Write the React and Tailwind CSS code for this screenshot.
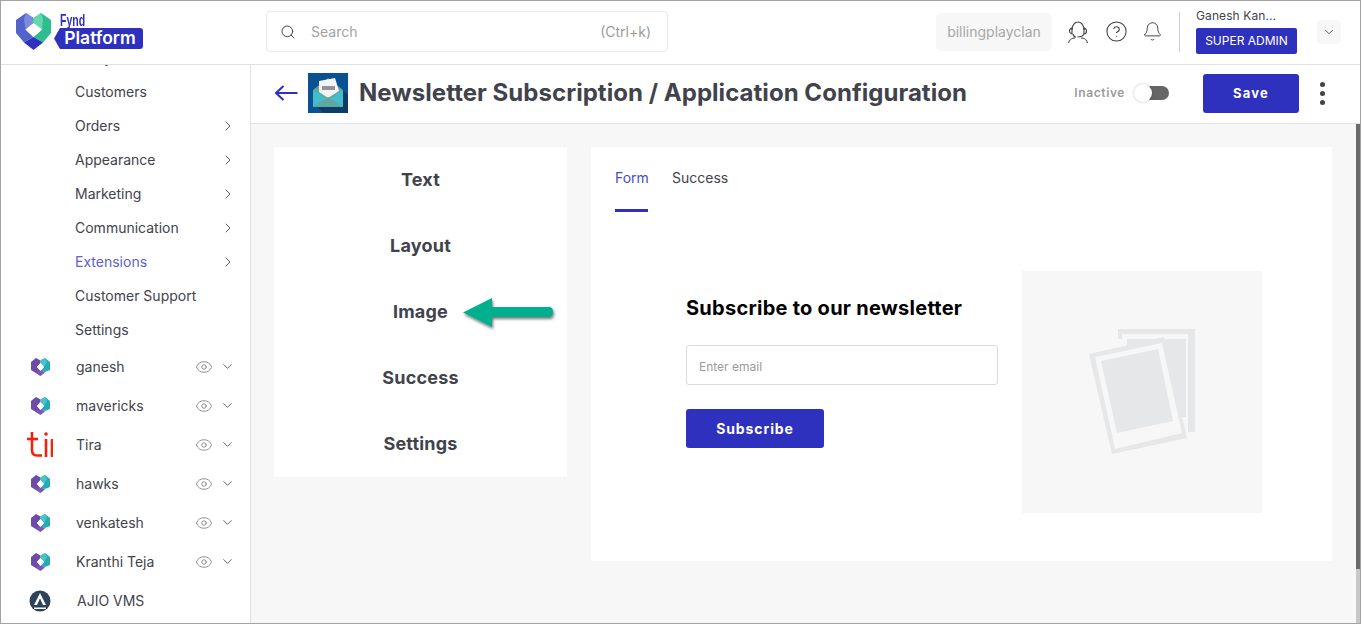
import React from 'react'
import { Search, ChevronRight, ChevronDown, Eye, HelpCircle, Bell } from 'lucide-react'

const navItems = [
  { label: 'Analytics' },
  { label: 'Customers' },
  { label: 'Orders', arrow: true },
  { label: 'Appearance', arrow: true },
  { label: 'Marketing', arrow: true },
  { label: 'Communication', arrow: true },
  { label: 'Extensions', arrow: true, active: true },
  { label: 'Customer Support' },
  { label: 'Settings' },
]

const companies = [
  { label: 'ganesh', logo: 'heart' },
  { label: 'mavericks', logo: 'heart' },
  { label: 'Tira', logo: 'tira' },
  { label: 'hawks', logo: 'heart' },
  { label: 'venkatesh', logo: 'heart' },
  { label: 'Kranthi Teja', logo: 'heart' },
  { label: 'AJIO VMS', logo: 'ajio' },
]

function FyndLogo() {
  return (
    <svg width="35" height="37" viewBox="0 0 35 37" className="shrink-0">
      <path d="M0 7 L10 0 L17.5 5 V10 L9.5 16.5 L17.5 24 L8 29.5 L0 20 Z" fill="#5263cc" />
      <path d="M10 0 L17.5 5 V10 L9.5 16.5 L8 6 Z" fill="#7a8be2" />
      <path d="M17.5 5 L25 0 L35 7 V20 L27 29.5 L17.5 24 L26 16.5 L17.5 10 Z" fill="#2dbd8e" />
      <path d="M17.5 5 L25 0 L27 6 L26 16.5 L17.5 10 Z" fill="#63d8b0" />
      <path d="M17.5 24 L27 29.5 L17.5 37 L8 29.5 Z" fill="#2e31be" />
      <path d="M17.5 10 L26 16.5 L17.5 24 L9.5 16.5 Z" fill="#ffffff" />
    </svg>
  )
}

function HeartLogo() {
  return (
    <svg width="19" height="18" viewBox="0 0 19 18" className="shrink-0">
      <path d="M0 4 L5 0 L9.5 2.5 V5 L6 9 L9.5 13 V18 L0 12 Z" fill="#6c4ca8" />
      <path d="M9.5 2.5 L14 0 L19 4 V12 L14 14 L9.5 13 L13 9 L9.5 5 Z" fill="#27aab5" />
      <path d="M9.5 2.5 L14 0 L16 4 L13 9 L9.5 5 Z" fill="#47c5c6" />
      <path d="M5 14 L9.5 12 L14 14.5 L9.5 18 Z" fill="#7a58b5" />
      <path d="M9.5 5 L13 9 L9.5 13 L6 9 Z" fill="#ffffff" />
    </svg>
  )
}

function TiraLogo() {
  return (
    <svg width="26" height="25" viewBox="0 0 26 25" className="shrink-0">
      <g fill="none" stroke="#f0230f" strokeWidth="2.6">
        <path d="M5 0 V18 Q5 23.5 10 23.5 H15" />
        <path d="M0 7 H11" />
        <path d="M19 7 V25" />
        <path d="M25 25 V7" />
      </g>
      <circle cx="19" cy="2" r="1.8" fill="#f0230f" />
    </svg>
  )
}

function AjioLogo() {
  return (
    <svg width="22" height="22" viewBox="0 0 22 22" className="shrink-0">
      <circle cx="11" cy="11" r="10.5" fill="#2c4358" />
      <path d="M11 3 L17 15 H14 L11 8.5 L8 15 H5 Z" fill="#ffffff" />
      <path d="M5 17.5 H17 V19 H5 Z" fill="#ffffff" />
    </svg>
  )
}

function SupportIcon() {
  return (
    <svg width="22" height="22" viewBox="0 0 22 22" fill="none" stroke="#41434c" strokeWidth="1.1" className="shrink-0">
      <path d="M5 9 C5 4 8 1 11 1 C14 1 17 4 17 9" />
      <path d="M5 7 C3 7.5 2.5 9 2.5 10 C2.5 11.5 3.5 12.5 5 13 Z" />
      <path d="M17 7 C19 7.5 19.5 9 19.5 10 C19.5 12 18 13 17 13 C16 15 14 16 10.5 16" />
      <path d="M17 7 V13" />
      <path d="M6 13 C6.5 15 8 16 9 16" />
      <path d="M1.5 22 C2 19 5 17 8 17" />
      <path d="M14 17 C17 17 20 19 20.5 22" />
    </svg>
  )
}

function PlaceholderIcon() {
  return (
    <svg width="107" height="126" viewBox="0 0 107 126">
      <path d="M29 0 H106 V103 H99 V5 H33 V10 H29 Z" fill="#e6e7e8" />
      <path d="M38 10 H97 V88 H60 L38 20 Z" fill="#e6e7e8" />
      <path d="M0 25 L75 8 L98 109 L23 125 Z" fill="#e6e7e8" />
      <path d="M6 28 L73 14 L93 104 L26 120 Z" fill="#f7f7f7" />
      <path d="M12 32 L69 20 L84 92 L28 104 Z" fill="#e6e7e8" />
    </svg>
  )
}

function EnvelopeIcon() {
  return (
    <svg width="40" height="40" viewBox="0 0 40 40" className="shrink-0">
      <rect width="40" height="40" fill="#0a5191" />
      <path d="M5 17 L20 5 L35 17 L40 22 V40 H16 L5 30 Z" fill="#0b3d66" />
      <path d="M5 17 L20 5 L35 17 V34 H5 Z" fill="#5fa89f" />
      <path d="M11 8 L27 5 L31 18 L20 25 L11 19 Z" fill="#f4f4f4" />
      <path d="M14 13 H27 V17 H14 Z" fill="#9a9097" />
      <path d="M5 17 L20 27 L35 17 V34 H5 Z" fill="#45bccb" />
      <path d="M5 34 L20 24 L35 34 Z" fill="#5fa89f" />
    </svg>
  )
}

function GreenArrow() {
  return (
    <svg width="96" height="38" viewBox="0 0 96 38" className="absolute top-[294px] left-[461px]">
      <defs>
        <filter id="arrow-shadow" x="-20%" y="-30%" width="140%" height="170%">
          <feDropShadow dx="1" dy="2" stdDeviation="1.5" floodColor="#000000" floodOpacity="0.55" />
        </filter>
      </defs>
      <path
        d="M1 17.5 L30 3 V12 H87 Q91 12 91 17 Q91 22 87 22 H30 V32 Z"
        fill="#04af8d"
        filter="url(#arrow-shadow)"
      />
    </svg>
  )
}

export default function App() {
  return (
    <div className="relative h-[624px] w-[1361px] overflow-hidden border border-[#a3a3a3] bg-white font-['Inter',sans-serif]">
      {/* top bar */}
      <header className="flex h-[64px] items-center border-b border-[#e2e2e2] bg-white pb-[2px]">
        <div className="flex w-[265px] shrink-0 items-center pl-[15px]">
          <FyndLogo />
          <div className="ml-[3px] flex flex-col">
            <span className="ml-[6px] h-[14px] origin-left scale-x-[0.62] font-['Liberation_Sans',sans-serif] text-[17px] leading-[14px] font-bold text-[#2e31be]">
              Fynd
            </span>
            <span className="flex h-[21px] w-[89px] items-center justify-center rounded-r-[3px] bg-[#2e31be] pl-[3px] text-[17.5px] font-semibold text-white [clip-path:polygon(6px_0,100%_0,100%_100%,6px_100%,0_50%)]">
              Platform
            </span>
          </div>
        </div>
        <div className="flex h-[41px] w-[402px] items-center rounded border border-[#e8e8e8] pr-[16px] pl-[13px]">
          <Search size={16} strokeWidth={1.5} className="text-[#41434c]" />
          <span className="ml-[15px] text-sm text-[#a3a3a3]">Search</span>
          <span className="ml-auto text-sm text-[#9b9b9b]">(Ctrl+k)</span>
        </div>
        <div className="ml-[268px] flex h-[38px] w-[116px] items-center justify-center rounded-md bg-[#f7f7f7] text-sm text-[#a8a8a8]">
          billingplayclan
        </div>
        <div className="ml-[15px]">
          <SupportIcon />
        </div>
        <HelpCircle size={23} strokeWidth={1.1} className="ml-[16px] text-[#41434c]" />
        <Bell size={21} strokeWidth={1.1} className="ml-[14px] text-[#41434c]" />
        <div className="ml-[16px] h-[40px] w-px bg-[#cfcfcf]" />
        <div className="ml-[16px] flex w-[101px] flex-col items-start">
          <span className="text-xs leading-[14px] tracking-[0.1px] text-[#41434c]">Ganesh Kan...</span>
          <span className="mt-[5px] flex h-[26px] w-[101px] items-center justify-center rounded-[2px] bg-[#2e31be] text-xs text-white">
            SUPER ADMIN
          </span>
        </div>
        <div className="ml-[20px] flex h-[24px] w-[24px] items-center justify-center rounded bg-[#f7f7f7]">
          <ChevronDown size={14} strokeWidth={1.5} className="text-[#41434c]" />
        </div>
      </header>

      <div className="flex h-[558px]">
        {/* sidebar */}
        <aside className="h-full w-[250px] shrink-0 overflow-hidden border-r border-[#e2e2e2] bg-white">
          <div className="-mt-[24px]">
            {navItems.map((item) => (
              <div key={item.label} className="flex h-[34px] items-center pr-[14px] pl-[74px]">
                <span className={`text-sm ${item.active ? 'text-[#5c5fd6]' : 'text-[#41434c]'}`}>{item.label}</span>
                {item.arrow && <ChevronRight size={16} strokeWidth={1.3} className="ml-auto text-[#41434c]" />}
              </div>
            ))}
            {companies.map((c) => (
              <div key={c.label} className="flex h-[39px] items-center pr-[15px]">
                <div className="flex w-[75px] shrink-0 pl-[30px]">
                  {c.logo === 'heart' && <HeartLogo />}
                  {c.logo === 'tira' && <div className="-ml-[4px]"><TiraLogo /></div>}
                  {c.logo === 'ajio' && <div className="-ml-[2px]"><AjioLogo /></div>}
                </div>
                <span className={`text-sm text-[#41434c] ${c.logo === 'ajio' ? 'ml-[1px]' : ''}`}>{c.label}</span>
                {c.logo !== 'ajio' && (
                  <>
                    <Eye size={18} strokeWidth={1} className="ml-auto text-[#6e6e6e]" />
                    <ChevronDown size={15} strokeWidth={1.3} className="ml-[7px] text-[#41434c]" />
                  </>
                )}
              </div>
            ))}
          </div>
        </aside>

        {/* main */}
        <main className="relative min-w-0 flex-1 bg-[#f7f7f7]">
          <div className="flex h-[59px] items-center border-b border-[#e2e2e2] bg-white pr-[35px] pb-[2px] pl-[24px]">
            <svg width="23" height="16" viewBox="0 0 23 16" fill="none" stroke="#2e31be" strokeWidth="2" className="shrink-0">
              <path d="M1 8 H22.5 M8.5 1 L1 8 L8.5 15" />
            </svg>
            <div className="ml-[10px]">
              <EnvelopeIcon />
            </div>
            <h1 className="ml-[11px] text-2xl font-bold tracking-[0.04px] whitespace-nowrap text-[#41434c]">
              Newsletter Subscription / Application Configuration
            </h1>
            <span className="ml-auto text-xs font-semibold tracking-[0.6px] text-[#9b9b9b]">Inactive</span>
            <div className="relative ml-[9px] h-[14px] w-[35px]">
              <div className="absolute top-0 right-0 h-[14px] w-[25px] rounded-full bg-[#666666]" />
              <div className="absolute -top-[2px] left-0 h-[18px] w-[18px] rounded-full bg-white shadow-[0_0_3px_rgba(0,0,0,0.25)]" />
            </div>
            <button className="ml-[34px] h-[39px] w-[96px] rounded-[3px] bg-[#2e31be] pt-[1px] text-[13px] font-bold tracking-[1.2px] text-white">
              Save
            </button>
            <div className="ml-[21px] flex flex-col gap-[4px]">
              <span className="h-[5px] w-[5px] rounded-full bg-[#41434c]" />
              <span className="h-[5px] w-[5px] rounded-full bg-[#41434c]" />
              <span className="h-[5px] w-[5px] rounded-full bg-[#41434c]" />
            </div>
          </div>

          <div className="flex items-start gap-[24px] pt-[23px] pl-[23px]">
            <div className="flex h-[330px] w-[293px] flex-col bg-white">
              {['Text', 'Layout', 'Image', 'Success', 'Settings'].map((t) => (
                <div key={t} className="flex h-[66px] items-center justify-center text-lg font-bold tracking-[0.2px] text-[#41434c]">
                  {t}
                </div>
              ))}
            </div>

            <div className="h-[414px] w-[741px] bg-white">
              <div className="flex gap-[24px] px-[24px]">
                <div className="h-[65px] w-[33px] border-b-[3px] border-[#2e31be] pt-[21px] text-sm leading-[20px] text-[#4a4dc5]">Form</div>
                <div className="pt-[21px] text-sm leading-[20px] text-[#41434c]">Success</div>
              </div>
              <div className="mt-[59px] flex pl-[95px]">
                <div className="w-[312px] pt-[24px]">
                  <h2 className="text-[20px] leading-[26px] font-bold tracking-[0.26px] text-black">Subscribe to our newsletter</h2>
                  <div className="mt-[24px] flex h-[40px] items-center rounded-[3px] border border-[#dcdcdc] px-[12px] pt-[4px] text-xs text-[#9b9b9b]">
                    Enter email
                  </div>
                  <button className="mt-[24px] h-[39px] w-[138px] rounded-[3px] bg-[#2e31be] text-sm font-bold tracking-[0.9px] text-white">
                    Subscribe
                  </button>
                </div>
                <div className="ml-[24px] flex h-[242px] w-[240px] items-center justify-center bg-[#f7f7f7]">
                  <PlaceholderIcon />
                </div>
              </div>
            </div>
          </div>

          {/* page scrollbar */}
          <div className="absolute top-[59px] right-0 bottom-0 w-[4px] bg-[#c8c8c8]">
            <div className="h-[445px] bg-[#6b6b6b]" />
          </div>
        </main>
      </div>

      <GreenArrow />
    </div>
  )
}
